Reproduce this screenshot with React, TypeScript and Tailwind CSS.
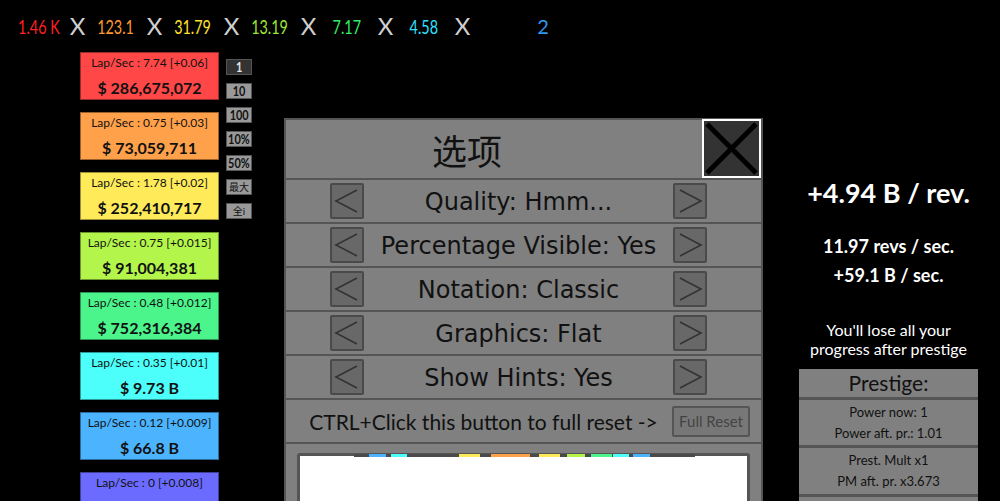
import React from "react";

const topNums = [
  { t: "1.46 K", c: "#ff2222" },
  { t: "123.1", c: "#ff9a33" },
  { t: "31.79", c: "#ffe02e" },
  { t: "13.19", c: "#9de636" },
  { t: "7.17", c: "#33ee66" },
  { t: "4.58", c: "#33e0ff" },
];

const cards = [
  { a: "Lap/Sec : 7.74 [+0.06]", b: "$ 286,675,072", c: "bg-[#ff4747]" },
  { a: "Lap/Sec : 0.75 [+0.03]", b: "$ 73,059,711", c: "bg-[#ffa04a]" },
  { a: "Lap/Sec : 1.78 [+0.02]", b: "$ 252,410,717", c: "bg-[#ffeb5a]" },
  { a: "Lap/Sec : 0.75 [+0.015]", b: "$ 91,004,381", c: "bg-[#b4f54c]" },
  { a: "Lap/Sec : 0.48 [+0.012]", b: "$ 752,316,384", c: "bg-[#4cf58c]" },
  { a: "Lap/Sec : 0.35 [+0.01]", b: "$ 9.73 B", c: "bg-[#4cfffa]" },
  { a: "Lap/Sec : 0.12 [+0.009]", b: "$ 66.8 B", c: "bg-[#4cb4ff]" },
  { a: "Lap/Sec : 0 [+0.008]", b: "$ 1 T", c: "bg-[#6b6bff]" },
];

const mults = ["1", "10", "100", "10%", "50%", "最大", "全i"];

const options = [
  "Quality: Hmm...",
  "Percentage Visible: Yes",
  "Notation: Classic",
  "Graphics: Flat",
  "Show Hints: Yes",
];

const segs: [number, number, string][] = [
  [354, 369, "#4a4a4a"],
  [369, 386, "#4cb4ff"],
  [386, 391, "#4a4a4a"],
  [391, 407, "#4cfffa"],
  [407, 459, "#4a4a4a"],
  [459, 480, "#ffeb5a"],
  [480, 491, "#4a4a4a"],
  [491, 530, "#ffa04a"],
  [530, 539, "#4a4a4a"],
  [539, 560, "#ffeb5a"],
  [560, 567, "#4a4a4a"],
  [567, 585, "#b4f54c"],
  [585, 591, "#4a4a4a"],
  [591, 612, "#4cf58c"],
  [612, 613, "#4a4a4a"],
  [613, 629, "#4cfffa"],
  [629, 633, "#4a4a4a"],
  [633, 650, "#4cb4ff"],
  [650, 695, "#4a4a4a"],
];

function Arrow({ dir }: { dir: "l" | "r" }) {
  return (
    <div className="w-[34px] h-[36px] bg-[#686868] border-2 border-[#4a4a4a] rounded-[2px] flex items-center justify-center shrink-0">
      <svg width="30" height="32" viewBox="0 0 30 32">
        {dir === "l" ? (
          <polyline points="25,5 4,16 25,27" fill="none" stroke="#333" strokeWidth="1.6" />
        ) : (
          <polyline points="5,5 26,16 5,27" fill="none" stroke="#333" strokeWidth="1.6" />
        )}
      </svg>
    </div>
  );
}

export default function App() {
  return (
    <div className="relative w-[1000px] h-[501px] bg-black overflow-hidden font-[Lato,'Noto_Sans_CJK_SC',sans-serif]">
      {/* top bar */}
      <div className="h-[52px] flex items-center pl-[14px]">
        {topNums.map((n, i) => (
          <React.Fragment key={i}>
            <div className="w-[50px] flex justify-center">
              <span
                className="inline-block text-[20px] leading-none whitespace-nowrap scale-x-[0.72]"
                style={{ color: n.c }}
              >
                {n.t}
              </span>
            </div>
            <div className="w-[27px] text-center text-[24px] leading-none text-[#cfcfcf]">X</div>
          </React.Fragment>
        ))}
        <div className="ml-[42px] w-[50px] text-center text-[20px] leading-none text-[#2f98ee]">2</div>
      </div>

      <div className="flex">
        {/* left cards */}
        <div className="ml-[80px] w-[139px] flex flex-col gap-3">
          {cards.map((c, i) => (
            <div
              key={i}
              className={`${c.c} h-[48px] shrink-0 border border-black/40 flex flex-col items-center pt-[3px] text-[#111]`}
            >
              <div className="text-[12px] leading-[14px]">{c.a}</div>
              <div className="mt-[8px] text-[16px] font-bold leading-[20px]">{c.b}</div>
            </div>
          ))}
        </div>

        {/* multiplier buttons */}
        <div className="ml-[7px] mt-[7px] w-[26px] flex flex-col gap-2">
          {mults.map((m, i) => (
            <div
              key={i}
              className={`h-[16px] flex items-center justify-center border border-[#555] leading-none whitespace-nowrap overflow-hidden ${
                i === 0 ? "bg-[#333] text-[#e5e5e5]" : "bg-[#999] text-[#111]"
              }`}
            >
              <span
                className={`inline-block ${
                  i >= 5 ? "text-[10px]" : "text-[14px] font-bold scale-x-[0.78]"
                }`}
              >
                {m}
              </span>
            </div>
          ))}
        </div>

        {/* right panel */}
        <div className="ml-[547px] w-[179px] flex flex-col items-center text-white">
          <div className="mt-[125px] text-[27px] font-bold leading-[32px] whitespace-nowrap">+4.94 B / rev.</div>
          <div className="mt-[23px] text-[18px] font-bold leading-[29px]">11.97 revs / sec.</div>
          <div className="text-[18px] font-bold leading-[29px]">+59.1 B / sec.</div>
          <div className="mt-[30px] text-[16px] leading-[19px] text-center whitespace-nowrap">
            You'll lose all your
            <br />
            progress after prestige
          </div>
          <div className="mt-[11px] w-[179px] bg-[#808080] text-[#111] flex flex-col">
            <div className="h-[28px] flex items-center justify-center text-[21px]">Prestige:</div>
            <div className="border-t-[3px] border-[#555] h-[48px] flex flex-col items-center justify-center text-[13px] leading-[21px]">
              <div>Power now: 1</div>
              <div>Power aft. pr.: 1.01</div>
            </div>
            <div className="border-t-[3px] border-[#555] h-[49px] flex flex-col items-center justify-center text-[13px] leading-[21px]">
              <div>Prest. Mult x1</div>
              <div>PM aft. pr. x3.673</div>
            </div>
            <div className="border-t-[3px] border-[#555] h-[40px]"></div>
          </div>
        </div>
      </div>

      {/* options modal */}
      <div className="absolute left-[284px] top-[118px] w-[479px] h-[400px] bg-[#808080] border-2 border-[#555] flex flex-col text-[#111]">
        <div className="h-[58px] flex shrink-0">
          <div className="flex-1 flex items-center pl-[146px] text-[35px] leading-none font-['Noto_Sans_CJK_SC',sans-serif]">
            选项
          </div>
          <div className="w-[59px] h-[59px] -mt-[1px] border-2 border-white bg-[#333] flex items-center justify-center">
            <svg width="55" height="55" viewBox="0 0 55 55">
              <line x1="3" y1="3" x2="52" y2="52" stroke="#000" strokeWidth="5" />
              <line x1="52" y1="3" x2="3" y2="52" stroke="#000" strokeWidth="5" />
            </svg>
          </div>
        </div>
        {options.map((o, i) => (
          <div key={i} className="h-[44px] shrink-0 border-t-2 border-[#555] flex items-center pl-[44px] pr-[54px]">
            <Arrow dir="l" />
            <div className="flex-1 pt-[2px] text-center text-[24px] leading-none whitespace-nowrap font-['DejaVu_Sans',sans-serif]">{o}</div>
            <Arrow dir="r" />
          </div>
        ))}
        <div className="h-[44px] shrink-0 border-t-2 border-[#555] flex items-center pl-[23px]">
          <div className="w-[349px] text-center text-[21px] leading-none whitespace-nowrap">
            CTRL+Click this button to full reset -&gt;
          </div>
          <div className="ml-[14px] w-[78px] h-[31px] bg-[#777] border-2 border-[#555] rounded-[2px] flex items-center justify-center text-[15px] text-[#444] whitespace-nowrap">
            Full Reset
          </div>
        </div>
        <div className="border-t-2 border-[#555] pt-[9px] px-[11px] flex-1">
          <div className="relative h-full bg-white border-[3px] border-[#555] rounded-[3px]">
            <svg className="absolute -top-[2px] left-0" width="450" height="3" viewBox="0 0 450 3">
              {segs.map(([a, b, c], i) => (
                <rect key={i} x={a - 300} y="0" width={b - a} height="3" fill={c} />
              ))}
            </svg>
          </div>
        </div>
      </div>
    </div>
  );
}
